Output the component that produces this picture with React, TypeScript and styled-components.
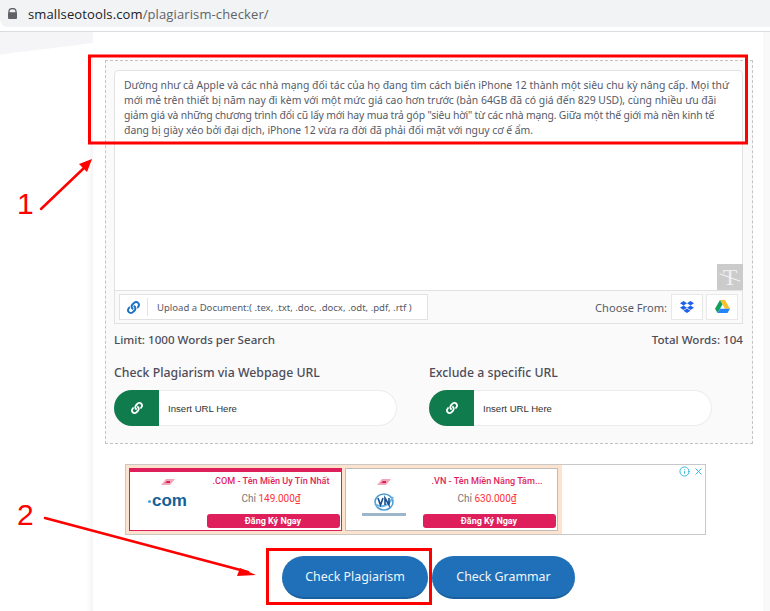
import React from 'react';
import styled, { createGlobalStyle } from 'styled-components';
import { FaLink, FaDropbox } from 'react-icons/fa';
import { Info, X } from 'lucide-react';

const GlobalStyle = createGlobalStyle`
  html, body {
    margin: 0;
    padding: 0;
    background: #fff;
    font-family: "Noto Sans", "Open Sans", sans-serif;
  }
  * { box-sizing: border-box; }
`;

const articleLines = [
  { text: 'Dường như cả Apple và các nhà mạng đối tác của họ đang tìm cách biến iPhone 12 thành một siêu chu kỳ nâng cấp. Mọi thứ', spacing: 0 },
  { text: 'mới mẻ trên thiết bị năm nay đi kèm với một mức giá cao hơn trước (bản 64GB đã có giá đến 829 USD), cùng nhiều ưu đãi', spacing: 0 },
  { text: 'giảm giá và những chương trình đổi cũ lấy mới hay mua trả góp "siêu hời" từ các nhà mạng. Giữa một thế giới mà nền kinh tế', spacing: -0.17 },
  { text: 'đang bị giày xéo bởi đại dịch, iPhone 12 vừa ra đời đã phải đối mặt với nguy cơ ế ẩm.', spacing: -0.03 },
];

function MiniLogo() {
  return (
    <svg width="16" height="9" viewBox="0 0 16 9">
      <path d="M1 7h9l5-6H6z" fill="#f3a6b8" />
      <path d="M5 5h5V3H7z" fill="#de1f5b" />
    </svg>
  );
}

function VnLogo() {
  return (
    <svg width="46" height="25" viewBox="0 0 46 25">
      <ellipse cx="23" cy="9" rx="9" ry="8" fill="none" stroke="#4b9bd3" strokeWidth="1.5" />
      <path d="M14 11c6 4 13 3 18-7" fill="none" stroke="#6db5df" strokeWidth="2" />
      <path d="M17 5l2.5 7 2.5-7M24 12V5l4 7V5" fill="none" stroke="#17508f" strokeWidth="1.6" />
      <rect x="1" y="20" width="44" height="3" fill="#9db4c9" />
    </svg>
  );
}

function DriveIcon() {
  return (
    <svg width="15" height="14" viewBox="0 0 15 14">
      <path d="M5 0h5l5 8.7h-5z" fill="#fbc02d" />
      <path d="M5 0l2.5 4.4L2.5 13 0 8.7z" fill="#12a05c" />
      <path d="M5 8.7h10L12.5 13h-10z" fill="#2684fc" />
    </svg>
  );
}

function Annotations() {
  return (
    <Overlay viewBox="0 0 770 611" width="770" height="611">
      <rect x="89.5" y="56" width="657" height="87" fill="none" stroke="#f00" strokeWidth="3" />
      <rect x="267.5" y="549.5" width="163" height="54" fill="none" stroke="#f00" strokeWidth="3" />
      <path d="M41 209L84 168" stroke="#f00" strokeWidth="2.5" strokeLinecap="round" />
      <path d="M92 159L79 164L87 172z" fill="#f00" />
      <path d="M45 518L248 572" stroke="#f00" strokeWidth="2.5" strokeLinecap="round" />
      <path d="M256 575L240 568L237 576z" fill="#f00" />
    </Overlay>
  );
}

export default function App() {
  return (
    <Screen>
      <GlobalStyle />
      <BrowserBar>
        <AddressBar>
          <svg width="9" height="11" viewBox="0 0 9 11">
            <path d="M1 4.5V3a3.5 3 0 0 1 7 0v1.5" transform="translate(0 .5)" fill="none" stroke="#5f6368" strokeWidth="1.3" />
            <rect y="4.2" width="9" height="6.8" rx="1" fill="#5f6368" />
          </svg>
          <Url>smallseotools.com<UrlPath>/plagiarism-checker/</UrlPath></Url>
        </AddressBar>
      </BrowserBar>
      <Page>
        <Gutter>
          <GutterBand />
        </Gutter>
        <Main>
          <CheckerBox>
            <Editor>
              <EditorText>
                {articleLines.map((line) => (
                  <TextLine key={line.text} $spacing={line.spacing}>{line.text}</TextLine>
                ))}
              </EditorText>
              <ClearButton><ClearGlyph>T</ClearGlyph></ClearButton>
            </Editor>
            <EditorToolbar>
              <UploadBox>
                <UploadIcon><FaLink size={13} color="#1d6fc4" /></UploadIcon>
                <UploadLabel>Upload a Document:( .tex, .txt, .doc, .docx, .odt, .pdf, .rtf )</UploadLabel>
              </UploadBox>
              <ChooseFrom>
                <ChooseLabel>Choose From:</ChooseLabel>
                <CloudButton><FaDropbox size={14} color="#1f62e8" /></CloudButton>
                <CloudButton><DriveIcon /></CloudButton>
              </ChooseFrom>
            </EditorToolbar>
            <CountRow>
              <span>Limit: 1000 Words per Search</span>
              <span>Total Words: 104</span>
            </CountRow>
            <UrlGrid>
              <UrlField>
                <FieldTitle>Check Plagiarism via Webpage URL</FieldTitle>
                <UrlInput>
                  <UrlBadge><FaLink size={12} color="#fff" /></UrlBadge>
                  <UrlPlaceholder>Insert URL Here</UrlPlaceholder>
                </UrlInput>
              </UrlField>
              <UrlField>
                <FieldTitle>Exclude a specific URL</FieldTitle>
                <UrlInput>
                  <UrlBadge><FaLink size={12} color="#fff" /></UrlBadge>
                  <UrlPlaceholder>Insert URL Here</UrlPlaceholder>
                </UrlInput>
              </UrlField>
            </UrlGrid>
          </CheckerBox>
          <AdBanner>
            <AdPeach>
              <AdCard $active>
                <AdLogo>
                  <MiniLogo />
                  <ComLogo><ComDot />com</ComLogo>
                </AdLogo>
                <AdBody>
                  <AdTitle>.COM - Tên Miền Uy Tín Nhất</AdTitle>
                  <AdPrice>Chỉ <strong>149.000₫</strong></AdPrice>
                  <AdButton>Đăng Ký Ngay</AdButton>
                </AdBody>
              </AdCard>
              <AdCard>
                <AdLogo>
                  <MiniLogo />
                  <VnLogo />
                </AdLogo>
                <AdBody>
                  <AdTitle>.VN - Tên Miền Nâng Tầm...</AdTitle>
                  <AdPrice>Chỉ <strong>630.000₫</strong></AdPrice>
                  <AdButton>Đăng Ký Ngay</AdButton>
                </AdBody>
              </AdCard>
            </AdPeach>
            <AdChoices>
              <Info size={11} color="#27b4d8" />
              <X size={11} color="#27b4d8" />
            </AdChoices>
          </AdBanner>
          <Actions>
            <ActionButton $width={146}>Check Plagiarism</ActionButton>
            <ActionButton $width={143}>Check Grammar</ActionButton>
          </Actions>
        </Main>
      </Page>
      <Annotations />
      <StepNumber $top={186} $left={17}>1</StepNumber>
      <StepNumber $top={497} $left={17}>2</StepNumber>
    </Screen>
  );
}

const Screen = styled.div`
  position: relative;
  width: 770px;
  height: 611px;
  overflow: hidden;
  background: #fff;
  color: #4a4a55;
`;

const Overlay = styled.svg`
  position: absolute;
  top: 0;
  left: 0;
  pointer-events: none;
`;

const StepNumber = styled.div<{ $top: number; $left: number }>`
  position: absolute;
  top: ${({ $top }) => $top}px;
  left: ${({ $left }) => $left}px;
  font-family: "Liberation Sans", sans-serif;
  font-size: 30px;
  line-height: 36px;
  color: #f00;
`;

const BrowserBar = styled.div`
  height: 32px;
  padding-bottom: 5px;
  border-bottom: 1px solid #dadce0;
  background: #fff;
`;

const AddressBar = styled.div`
  display: flex;
  align-items: center;
  gap: 11px;
  height: 27px;
  padding-left: 8px;
  background: #f1f3f4;
  border-bottom-left-radius: 8px;
`;

const Url = styled.div`
  font-family: "Open Sans", sans-serif;
  font-size: 13px;
  letter-spacing: 0.12px;
  color: #202124;
`;

const UrlPath = styled.span`
  color: #5f6368;
`;

const Page = styled.div`
  display: flex;
  height: 579px;
  padding-right: 7px;
  background: #f9f9f9;
`;

const Gutter = styled.div`
  flex: none;
  width: 93px;
  background: #fff;
  box-shadow: inset -8px 0 8px -8px #e8e8e8;
`;

const GutterBand = styled.div`
  height: 24px;
  background: linear-gradient(173deg, #f5f5f7 62%, #fff 65%);
`;

const Main = styled.main`
  flex: 1;
  min-width: 0;
  display: flex;
  flex-direction: column;
  padding: 28px 10px 0 12px;
  background: #fff;
`;

const CheckerBox = styled.section`
  height: 384px;
  padding: 9px 9px 0 8px;
  background: #fafafa;
  border: 1px dashed #c4c4c4;
`;

const Editor = styled.div`
  position: relative;
  height: 220px;
  padding: 7px 9px;
  background: #fff;
  border: 1px solid #e2e2e2;
  border-bottom: 0;
  border-radius: 5px 5px 0 0;
`;

const EditorText = styled.div`
  font-size: 10.4px;
  line-height: 15px;
  color: #555a66;
`;

const TextLine = styled.div<{ $spacing: number }>`
  letter-spacing: ${({ $spacing }) => $spacing}px;
  white-space: nowrap;
`;

const ClearButton = styled.div`
  position: absolute;
  right: -1px;
  bottom: 0;
  display: flex;
  align-items: center;
  justify-content: center;
  width: 26px;
  height: 26px;
  background: #cbcbcb;
  overflow: hidden;

  &::after {
    content: '';
    position: absolute;
    width: 22px;
    height: 1px;
    background: #f2f2f2;
    transform: rotate(20deg);
  }
`;

const ClearGlyph = styled.span`
  font-family: "Liberation Serif", serif;
  font-size: 24px;
  line-height: 1;
  color: #eeeeee;
`;

const EditorToolbar = styled.div`
  display: flex;
  align-items: center;
  justify-content: space-between;
  height: 34px;
  padding: 0 4px;
  border: 1px solid #e2e2e2;
`;

const UploadBox = styled.div`
  display: flex;
  align-items: center;
  width: 309px;
  height: 26px;
  background: #fff;
  border: 1px solid #e2e2e2;
`;

const UploadIcon = styled.span`
  display: flex;
  align-items: center;
  justify-content: center;
  width: 28px;
  height: 18px;
  border-right: 1px solid #e2e2e2;
`;

const UploadLabel = styled.span`
  padding-left: 9px;
  font-size: 9.55px;
  white-space: nowrap;
  color: #555a66;
`;

const ChooseFrom = styled.div`
  display: flex;
  align-items: center;
  gap: 3px;
`;

const ChooseLabel = styled.span`
  margin-right: 1px;
  font-size: 11.1px;
  color: #555a66;
`;

const CloudButton = styled.span`
  display: flex;
  align-items: center;
  justify-content: center;
  width: 32px;
  height: 26px;
  background: #fff;
  border: 1px solid #e8e8e8;
`;

const CountRow = styled.div`
  display: flex;
  justify-content: space-between;
  height: 16px;
  margin-top: 8px;
  font-size: 11.6px;
  font-weight: 500;
  line-height: 16px;
  color: #4d4d59;
`;

const UrlGrid = styled.div`
  display: flex;
  gap: 32px;
  margin-top: 16px;
`;

const UrlField = styled.div`
  width: 283px;
`;

const FieldTitle = styled.div`
  height: 18px;
  font-size: 12.3px;
  font-weight: 500;
  line-height: 18px;
  white-space: nowrap;
  color: #4d4d59;
`;

const UrlInput = styled.div`
  display: flex;
  align-items: center;
  height: 36px;
  margin-top: 8px;
  background: #fff;
  border: 1px solid #ececec;
  border-left: 0;
  border-radius: 18px;
`;

const UrlBadge = styled.span`
  display: flex;
  align-items: center;
  justify-content: center;
  width: 45px;
  height: 36px;
  background: #107c4d;
  border-radius: 18px 0 0 18px;
`;

const UrlPlaceholder = styled.span`
  padding-left: 9px;
  font-family: "Liberation Sans", sans-serif;
  font-size: 9.6px;
  color: #333;
`;

const AdBanner = styled.aside`
  position: relative;
  display: flex;
  width: 581px;
  height: 71px;
  margin: 20px 0 0 20px;
  background: #fff;
  border: 1px solid #c8c8c8;
`;

const AdPeach = styled.div`
  display: flex;
  gap: 3px;
  width: 436px;
  padding: 3px;
  background: #fde3cd;
`;

const AdCard = styled.div<{ $active?: boolean }>`
  display: flex;
  width: 213px;
  padding-top: ${({ $active }) => ($active ? '0' : '3px')};
  background: #fff;
  border: 1px solid ${({ $active }) => ($active ? '#de1f5b' : '#bdbdbd')};
  border-top-width: ${({ $active }) => ($active ? '4px' : '1px')};
`;

const AdLogo = styled.div`
  flex: none;
  display: flex;
  flex-direction: column;
  align-items: center;
  gap: 6px;
  width: 75px;
  padding-top: 6px;
`;

const ComLogo = styled.div`
  display: flex;
  align-items: center;
  font-family: "Liberation Sans", sans-serif;
  font-size: 17px;
  font-weight: 700;
  line-height: 16px;
  color: #155f98;
`;

const ComDot = styled.span`
  width: 3px;
  height: 3px;
  margin: 1px 1px 0 0;
  background: #3aa6e0;
  border-radius: 50%;
`;

const AdBody = styled.div`
  flex: 1;
  display: flex;
  flex-direction: column;
  align-items: center;
`;

const AdTitle = styled.div`
  margin-top: 2px;
  margin-right: 4px;
  font-family: "Roboto", sans-serif;
  font-size: 9.1px;
  font-weight: 500;
  line-height: 14px;
  white-space: nowrap;
  color: #de1f5b;
`;

const AdPrice = styled.div`
  margin-top: 3px;
  margin-right: 4px;
  font-family: "Roboto", sans-serif;
  font-size: 10px;
  line-height: 16px;
  color: #777;

  strong {
    font-weight: 400;
    color: #f33;
  }
`;

const AdButton = styled.div`
  width: 133px;
  height: 14px;
  margin-top: auto;
  margin-bottom: 2px;
  font-family: "Roboto", sans-serif;
  font-size: 9px;
  font-weight: 700;
  line-height: 14px;
  text-align: center;
  color: #fff;
  background: #de1f5b;
  border-radius: 3px;
`;

const AdChoices = styled.div`
  position: absolute;
  top: 1px;
  right: 1px;
  display: flex;
  align-items: center;
  gap: 3px;
`;

const Actions = styled.div`
  display: flex;
  gap: 4px;
  margin: 21px 0 0 177px;
`;

const ActionButton = styled.button<{ $width: number }>`
  width: ${({ $width }) => $width}px;
  height: 43px;
  padding: 0;
  font-family: "Noto Sans", sans-serif;
  font-size: 12.4px;
  color: #f0f6fc;
  background: #1f70b8;
  border: 0;
  border-bottom: 2px solid #1a5f9d;
  border-radius: 22px;
`;
